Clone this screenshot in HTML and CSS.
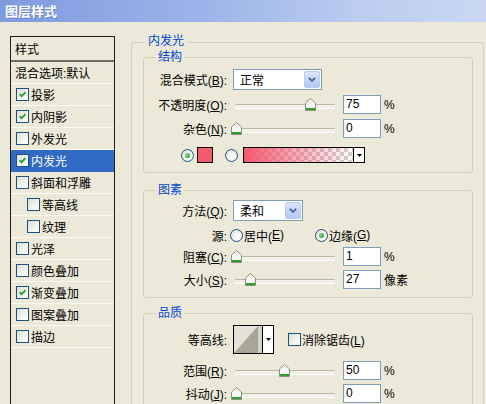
FILE: index.html
```html
<!DOCTYPE html>
<html lang="zh-CN">
<head>
<meta charset="utf-8">
<title>图层样式</title>
<link rel="stylesheet" href="styles.css">
</head>
<body>
<div class="titlebar">图层样式</div>
<div class="content">
  <div class="style-list">
    <div class="list-header">样式</div>
    <div class="list-row">混合选项:默认</div>
    <div class="list-row check"><span class="cb"><svg width="7" height="7" viewBox="0 0 7 7"><path d="M0.6 3.2 L2.6 5.3 L6.4 1.2" fill="none" stroke="#21a121" stroke-width="1.8"/></svg></span>投影</div>
    <div class="list-row check"><span class="cb"><svg width="7" height="7" viewBox="0 0 7 7"><path d="M0.6 3.2 L2.6 5.3 L6.4 1.2" fill="none" stroke="#21a121" stroke-width="1.8"/></svg></span>内阴影</div>
    <div class="list-row check"><span class="cb"></span>外发光</div>
    <div class="list-row check selected"><span class="cb"><svg width="7" height="7" viewBox="0 0 7 7"><path d="M0.6 3.2 L2.6 5.3 L6.4 1.2" fill="none" stroke="#21a121" stroke-width="1.8"/></svg></span>内发光</div>
    <div class="list-row check"><span class="cb"></span>斜面和浮雕</div>
    <div class="list-row sub"><span class="cb"></span>等高线</div>
    <div class="list-row sub"><span class="cb"></span>纹理</div>
    <div class="list-row check"><span class="cb"></span>光泽</div>
    <div class="list-row check"><span class="cb"></span>颜色叠加</div>
    <div class="list-row check"><span class="cb"><svg width="7" height="7" viewBox="0 0 7 7"><path d="M0.6 3.2 L2.6 5.3 L6.4 1.2" fill="none" stroke="#21a121" stroke-width="1.8"/></svg></span>渐变叠加</div>
    <div class="list-row check"><span class="cb"></span>图案叠加</div>
    <div class="list-row check"><span class="cb"></span>描边</div>
  </div>

  <div class="panel">
    <div class="group outer">
      <span class="legend legend-outer">内发光</span>

      <div class="group inner g-struct">
        <span class="legend">结构</span>
        <div class="row r-select">
          <span class="lbl">混合模式(<u>B</u>):</span>
          <div class="select w-mode"><span class="sel-text">正常</span><span class="sel-btn"><svg width="8" height="5" viewBox="0 0 8 5"><path d="M0.8 0.8 L4 3.8 L7.2 0.8" fill="none" stroke="#4d6185" stroke-width="1.8"/></svg></span></div>
        </div>
        <div class="row r-input gap5">
          <span class="lbl">不透明度(<u>O</u>):</span>
          <div class="slider"><span class="thumb" style="left:74px"><svg width="11" height="13" viewBox="0 0 11 13"><path d="M0.5 5 L5.5 0.5 L10.5 5 V12.5 H0.5 Z" fill="#f4f4f0" stroke="#8d8d82"/><rect x="1" y="10" width="9" height="2" fill="#2aa12a"/></svg></span></div>
          <span class="num">75</span><span class="unit">%</span>
        </div>
        <div class="row r-input gap5">
          <span class="lbl">杂色(<u>N</u>):</span>
          <div class="slider"><span class="thumb" style="left:0px"><svg width="11" height="13" viewBox="0 0 11 13"><path d="M0.5 5 L5.5 0.5 L10.5 5 V12.5 H0.5 Z" fill="#f4f4f0" stroke="#8d8d82"/><rect x="1" y="10" width="9" height="2" fill="#2aa12a"/></svg></span></div>
          <span class="num">0</span><span class="unit">%</span>
        </div>
        <div class="row color-row">
          <span class="radio on"></span>
          <span class="swatch"></span>
          <span class="radio r2"></span>
          <div class="grad"><span class="grad-fill"></span><span class="grad-btn"><svg width="5" height="3" viewBox="0 0 5 3"><path d="M0 0 H5 L2.5 3 Z" fill="#000"/></svg></span></div>
        </div>
      </div>

      <div class="group inner g-elem">
        <span class="legend">图素</span>
        <div class="row r-select">
          <span class="lbl">方法(<u>Q</u>):</span>
          <div class="select w-method"><span class="sel-text">柔和</span><span class="sel-btn"><svg width="8" height="5" viewBox="0 0 8 5"><path d="M0.8 0.8 L4 3.8 L7.2 0.8" fill="none" stroke="#4d6185" stroke-width="1.8"/></svg></span></div>
        </div>
        <div class="row r-radio">
          <span class="lbl">源:</span>
          <div class="opts">
            <span class="opt"><span class="radio"></span>居中(<u>E</u>)</span>
            <span class="opt"><span class="radio on"></span>边缘(<u>G</u>)</span>
          </div>
        </div>
        <div class="row r-input gap2">
          <span class="lbl">阻塞(<u>C</u>):</span>
          <div class="slider"><span class="thumb" style="left:0px"><svg width="11" height="13" viewBox="0 0 11 13"><path d="M0.5 5 L5.5 0.5 L10.5 5 V12.5 H0.5 Z" fill="#f4f4f0" stroke="#8d8d82"/><rect x="1" y="10" width="9" height="2" fill="#2aa12a"/></svg></span></div>
          <span class="num">1</span><span class="unit">%</span>
        </div>
        <div class="row r-input gap4">
          <span class="lbl">大小(<u>S</u>):</span>
          <div class="slider"><span class="thumb" style="left:14px"><svg width="11" height="13" viewBox="0 0 11 13"><path d="M0.5 5 L5.5 0.5 L10.5 5 V12.5 H0.5 Z" fill="#f4f4f0" stroke="#8d8d82"/><rect x="1" y="10" width="9" height="2" fill="#2aa12a"/></svg></span></div>
          <span class="num">27</span><span class="unit">像素</span>
        </div>
      </div>

      <div class="group inner g-quality">
        <span class="legend">品质</span>
        <div class="row r-contour">
          <span class="lbl">等高线:</span>
          <div class="contour">
            <svg class="contour-graph" width="28" height="27" viewBox="0 0 28 27"><rect width="28" height="27" fill="#e4e1d6"/><path d="M0 27 L24 0 V27 Z" fill="#a9a699"/><rect x="24" y="0" width="4" height="27" fill="#d6d3c8"/></svg>
            <span class="contour-btn"><svg width="5" height="3" viewBox="0 0 5 3"><path d="M0 0 H5 L2.5 3 Z" fill="#000"/></svg></span>
          </div>
          <span class="cb aa"></span><span class="aa-text">消除锯齿(<u>L</u>)</span>
        </div>
        <div class="row r-input gap7">
          <span class="lbl">范围(<u>R</u>):</span>
          <div class="slider"><span class="thumb" style="left:48px"><svg width="11" height="13" viewBox="0 0 11 13"><path d="M0.5 5 L5.5 0.5 L10.5 5 V12.5 H0.5 Z" fill="#f4f4f0" stroke="#8d8d82"/><rect x="1" y="10" width="9" height="2" fill="#2aa12a"/></svg></span></div>
          <span class="num">50</span><span class="unit">%</span>
        </div>
        <div class="row r-input gap4">
          <span class="lbl">抖动(<u>J</u>):</span>
          <div class="slider"><span class="thumb" style="left:0px"><svg width="11" height="13" viewBox="0 0 11 13"><path d="M0.5 5 L5.5 0.5 L10.5 5 V12.5 H0.5 Z" fill="#f4f4f0" stroke="#8d8d82"/><rect x="1" y="10" width="9" height="2" fill="#2aa12a"/></svg></span></div>
          <span class="num">0</span><span class="unit">%</span>
        </div>
      </div>
    </div>
  </div>
</div>
</body>
</html>
```
FILE: styles.css
```css
* { box-sizing: border-box; }
html, body { margin: 0; padding: 0; }
body {
  width: 486px;
  height: 404px;
  overflow: hidden;
  background: #ece9d8;
  font-family: "Liberation Sans", "Noto Sans CJK SC", sans-serif;
  font-size: 12px;
  color: #000;
}
u { text-decoration: underline; text-underline-offset: 1px; }

.titlebar {
  height: 22px;
  padding-left: 5px;
  line-height: 21px;
  font-family: "Noto Sans CJK SC", sans-serif;
  font-size: 13px;
  font-weight: bold;
  color: #fff;
  text-shadow: 1px 1px 0 #6d86c6;
  background: linear-gradient(to right, #7f9bdf 0%, #9ab3e8 40%, #bccdf0 75%, #c9d7f2 100%);
}

.content {
  display: flex;
  align-items: flex-start;
  height: 382px;
  overflow: hidden;
  padding: 14px 0 0 10px;
}

/* left style list */
.style-list {
  flex: none;
  width: 105px;
  height: 390px;
  border: 1px solid #1e1e1e;
}
.list-header {
  height: 25px;
  padding-left: 4px;
  border-bottom: 2px solid #6e6d63;
  display: flex;
  align-items: center;
}
.list-row {
  height: 22px;
  padding-left: 4px;
  border-bottom: 1px solid #fbfaf4;
  display: flex;
  align-items: center;
  white-space: nowrap;
}
.list-row.check { padding-left: 5px; }
.list-row.sub { padding-left: 16px; }
.list-row.selected { background: #316ac5; color: #fff; border-bottom-color: #316ac5; }
.list-row .cb { margin-right: 2px; }

.cb {
  flex: none;
  width: 13px;
  height: 13px;
  margin-right: 1px;
  border: 1px solid #1c5180;
  background: linear-gradient(135deg, #dcdcd5 0%, #f4f4f1 60%, #ffffff 100%);
  display: inline-flex;
  align-items: center;
  justify-content: center;
}

/* right panel */
.panel {
  flex: none;
  margin-left: 16px;
  margin-top: 6px;
}
.group {
  position: relative;
  border: 1px solid #d0d0bf;
  border-radius: 3px;
}
.outer {
  width: 353px;
  height: 400px;
  padding: 14px 10px 0 11px;
}
.legend {
  position: absolute;
  top: -8px;
  left: 12px;
  padding: 0 2px;
  line-height: 14px;
  background: #ece9d8;
  color: #0046d5;
}
.legend-outer { padding: 0 4px; top: -9px; }

.inner { width: 330px; }
.g-struct { height: 116px; padding-top: 11px; }
.g-elem { height: 108px; margin-top: 17px; padding-top: 9px; }
.g-quality { height: 120px; margin-top: 15px; padding-top: 11px; }

.row { display: flex; align-items: center; white-space: nowrap; }
.lbl { flex: none; width: 83px; text-align: right; }
.r-select { height: 21px; }
.r-input { height: 19px; }
.gap2 { margin-top: 2px; }
.gap4 { margin-top: 4px; }
.gap5 { margin-top: 5px; }
.gap7 { margin-top: 7px; }
.r-radio { height: 20px; margin-top: 4px; }
.r-contour { height: 29px; }

/* combo box */
.select {
  flex: none;
  margin-left: 6px;
  height: 21px;
  border: 1px solid #7f9db9;
  background: #fff;
  display: flex;
  align-items: stretch;
  padding: 1px;
}
.w-mode { width: 89px; }
.w-method { width: 70px; }
.sel-text {
  flex: 1;
  padding-left: 5px;
  display: flex;
  align-items: center;
}
.sel-btn {
  flex: none;
  width: 16px;
  border: 1px solid #b9cbf3;
  border-radius: 2px;
  background: linear-gradient(to bottom, #dce6fd 0%, #c3d4fb 50%, #b4c9f8 100%);
  display: flex;
  align-items: center;
  justify-content: center;
}

/* slider */
.slider {
  flex: none;
  position: relative;
  margin-left: 4px;
  width: 105px;
  height: 19px;
}
.slider::before {
  content: "";
  position: absolute;
  left: 4px;
  right: 1px;
  top: 9px;
  height: 3px;
  border-top: 1px solid #b9b6a8;
  border-bottom: 1px solid #ffffff;
  background: #f1efe6;
  border-radius: 1px;
}
.thumb {
  position: absolute;
  top: 3px;
  width: 11px;
  height: 13px;
  display: block;
}
.thumb svg { display: block; }

.num {
  flex: none;
  margin-left: 7px;
  width: 38px;
  height: 19px;
  border: 1px solid #7f9db9;
  background: #fff;
  padding-left: 2px;
  line-height: 17px;
}
.unit { margin-left: 3px; }

/* color row */
.color-row { height: 16px; margin-top: 9px; padding-left: 37px; }
.radio {
  flex: none;
  position: relative;
  width: 13px;
  height: 13px;
  border-radius: 50%;
  border: 1px solid #1c5180;
  background: radial-gradient(circle at 65% 65%, #ffffff 0%, #f2f2ee 45%, #d6d5cc 100%);
  display: inline-block;
}
.radio.on::after {
  content: "";
  position: absolute;
  left: 3px;
  top: 3px;
  width: 5px;
  height: 5px;
  border-radius: 50%;
  background: radial-gradient(circle at 40% 40%, #8ee08e 0%, #2aa12a 70%, #1e8a1e 100%);
}
.swatch {
  flex: none;
  margin-left: 3px;
  width: 16px;
  height: 16px;
  border: 1px solid #000;
  background: #f45a6e;
}
.radio.r2 { margin-left: 12px; }
.grad {
  flex: none;
  margin-left: 5px;
  width: 122px;
  height: 16px;
  border: 1px solid #000;
  display: flex;
}
.grad-fill {
  flex: 1;
  background-color: #fff;
  background-image:
    linear-gradient(to right, #f45a6e 0%, rgba(244, 90, 110, 0.55) 45%, rgba(244, 90, 110, 0) 100%),
    linear-gradient(45deg, #cfcfcf 25%, transparent 25%, transparent 75%, #cfcfcf 75%),
    linear-gradient(45deg, #cfcfcf 25%, transparent 25%, transparent 75%, #cfcfcf 75%);
  background-size: 100% 100%, 8px 8px, 8px 8px;
  background-position: 0 0, 0 0, 4px 4px;
}
.grad-btn {
  flex: none;
  width: 11px;
  border-left: 1px solid #000;
  background: #fff;
  display: flex;
  align-items: center;
  justify-content: center;
}

/* source radios */
.opts { display: flex; margin-left: 3px; }
.opt {
  flex: none;
  width: 85px;
  display: flex;
  align-items: center;
}
.opt .radio { margin-right: 1px; }

/* contour picker */
.contour {
  flex: none;
  margin-left: 6px;
  width: 41px;
  height: 29px;
  border: 1px solid #000;
  display: flex;
  background: #fff;
}
.contour-graph { display: block; flex: none; }
.contour-btn {
  flex: none;
  width: 11px;
  border-left: 1px solid #000;
  background: #fff;
  display: flex;
  align-items: center;
  justify-content: center;
}
.cb.aa { margin-left: 14px; margin-right: 1px; }
```
